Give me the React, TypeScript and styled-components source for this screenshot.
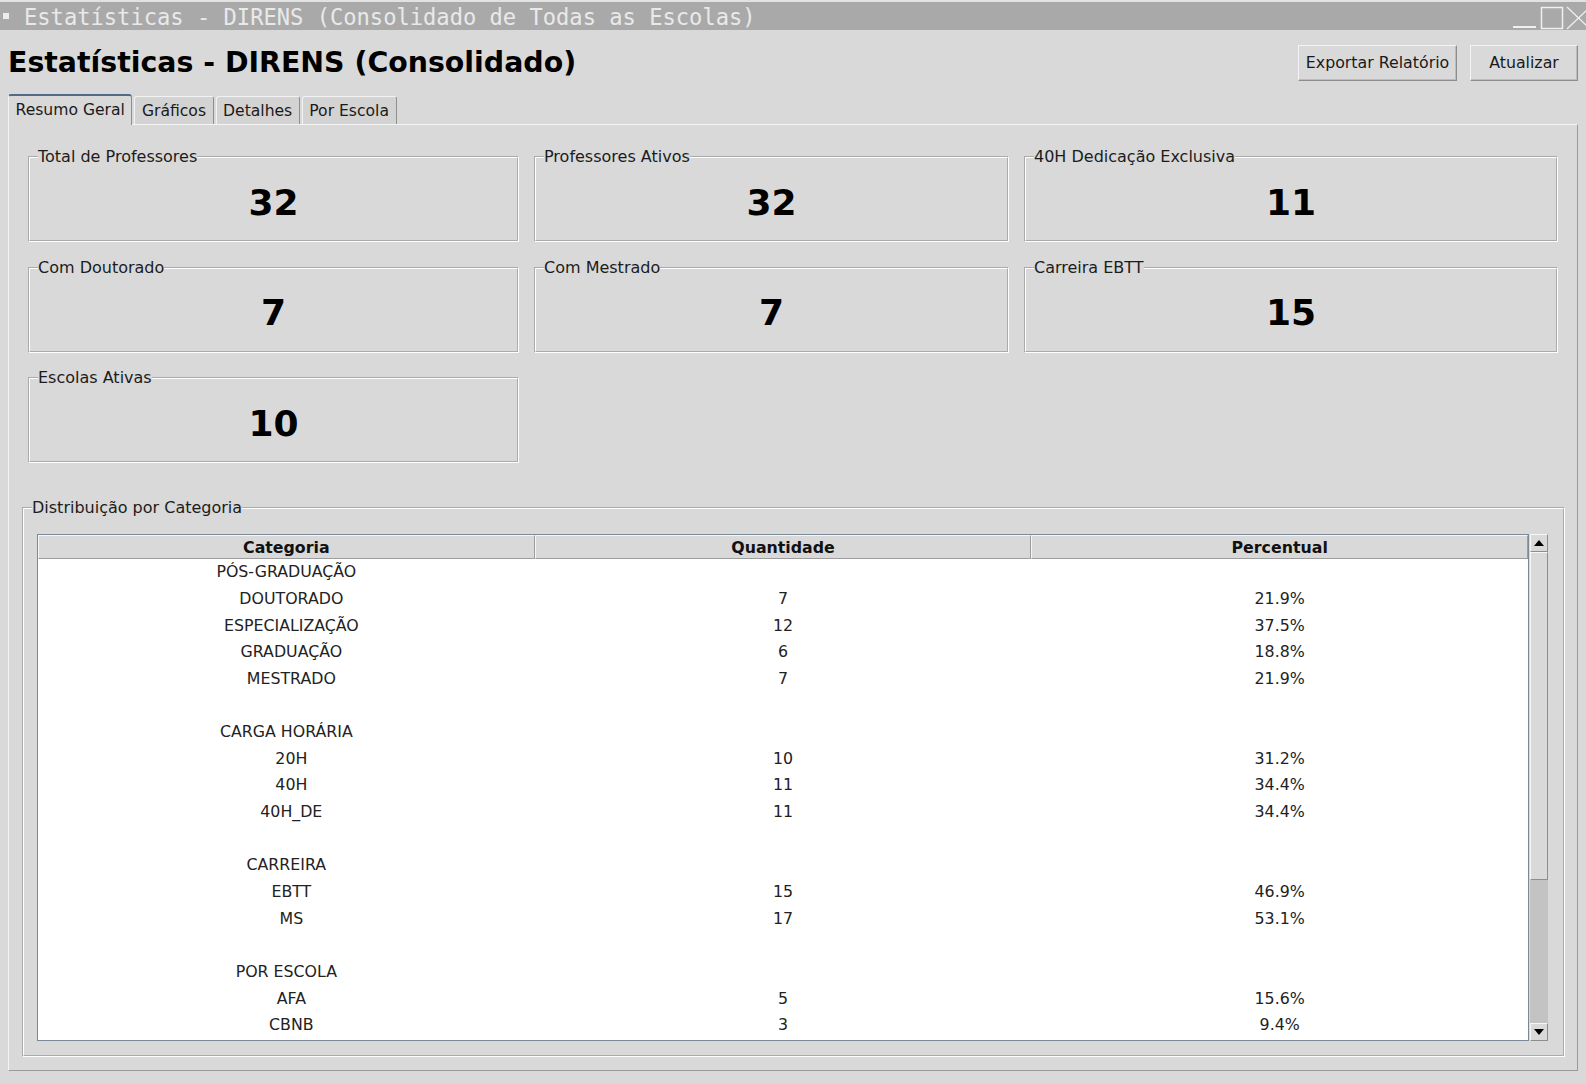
import React from 'react';
import styled, { createGlobalStyle } from 'styled-components';

const GlobalStyle = createGlobalStyle`
  html, body { margin: 0; padding: 0; background: #d9d9d9; }
  body {
    font-family: "DejaVu Sans", "Noto Sans", sans-serif;
    width: 1586px; height: 1084px; overflow: hidden;
  }
  * { box-sizing: border-box; }
`;

const Window = styled.div`
  width: 1586px;
  height: 1084px;
  display: flex;
  flex-direction: column;
  background: #d9d9d9;
`;

const TitleBar = styled.div`
  height: 30px;
  flex: none;
  border-top: 2px solid #e2e2e2;
  background: #a9a9a9;
  display: flex;
  align-items: center;
  padding-left: 3px;
  padding-top: 3px;
  font-family: "DejaVu Sans Mono", monospace;
  font-size: 22.1px;
  color: #e9e9e9;
  white-space: pre;
  overflow: hidden;
`;

const TitleBullet = styled.span`
  width: 6px;
  height: 6px;
  background: #ececec;
  margin-right: 15px;
  margin-top: -4px;
  flex: none;
`;

const TitleText = styled.span`
  flex: 1;
  line-height: 25px;
`;

const WinControls = styled.div`
  display: flex;
  align-items: center;
  height: 28px;
  margin-top: -3px;
  margin-right: -25px;
`;

const Header = styled.div`
  height: 64px;
  flex: none;
  display: flex;
  align-items: center;
  justify-content: space-between;
  padding: 0 8px;
`;

const Heading = styled.h1`
  margin: 0;
  font-size: 28.4px;
  font-weight: bold;
  color: #000;
  line-height: 34px;
  padding-top: 1px;
`;

const ButtonRow = styled.div`
  display: flex;
  gap: 13px;
  padding-top: 1px;
`;

const Button = styled.button<{ $w: number }>`
  width: ${(p) => p.$w}px;
  height: 36px;
  font-family: "DejaVu Sans", sans-serif;
  font-size: 15.8px;
  color: #1a1a1a;
  background: #d9d9d9;
  border: 1px solid;
  border-color: #f4f4f4 #8e8e8e #8e8e8e #f4f4f4;
  box-shadow: inset -1px -1px 0 #bcbcbc;
  padding: 0;
`;

const TabBar = styled.div`
  height: 30px;
  flex: none;
  display: flex;
  align-items: flex-end;
  gap: 2px;
  padding-left: 8px;
  position: relative;
  z-index: 1;
`;

const Tab = styled.div<{ $active?: boolean }>`
  height: ${(p) => (p.$active ? 31 : 28)}px;
  margin-bottom: ${(p) => (p.$active ? -1 : 0)}px;
  padding: 0 6.5px;
  display: flex;
  align-items: center;
  font-size: 15.6px;
  color: #1a1a1a;
  background: ${(p) => (p.$active ? '#d9d9d9' : '#d3d3d3')};
  border-top: ${(p) => (p.$active ? '2px solid #4f6b86' : '1px solid #f2f2f2')};
  border-left: 1px solid #f2f2f2;
  border-right: 1px solid #8f8f8f;
  border-radius: 3px 3px 0 0;
  padding-bottom: ${(p) => (p.$active ? 2 : 0)}px;
`;

const Pane = styled.div`
  flex: 1;
  margin: 0 8px 13px 8px;
  border: 1px solid;
  border-color: #f4f4f4 #9a9a9a #9a9a9a #f4f4f4;
  display: flex;
  flex-direction: column;
  padding: 23px 12px 13px 13px;
  min-height: 0;
`;

const CardGrid = styled.div`
  display: grid;
  grid-template-columns: 491px 475px 534px;
  column-gap: 15px;
  row-gap: 16.5px;
  margin: 0 6px;
`;

const Frame = styled.fieldset`
  margin: 0;
  padding: 0;
  min-width: 0;
  border: 2px groove #ffffff;
`;

const FrameLabel = styled.legend`
  margin-left: 8px;
  padding: 0;
  font-size: 16px;
  line-height: 18px;
  color: #1c1c1c;
`;

const CardValue = styled.div`
  height: 74px;
  display: flex;
  align-items: center;
  justify-content: center;
  font-size: 36px;
  font-weight: bold;
  color: #000;
  padding-bottom: 2px;
`;

const DistFrame = styled(Frame)`
  margin-top: 36px;
  flex: 1;
  display: flex;
  flex-direction: column;
  min-height: 0;
`;

const TableArea = styled.div`
  flex: 1;
  display: flex;
  margin: 17px 15px 14px 13px;
  min-height: 0;
`;

const Table = styled.div`
  flex: 1;
  border: 1px solid #7c8a98;
  background: #fff;
  display: flex;
  flex-direction: column;
  overflow: hidden;
  margin-right: 1px;
`;

const HeadRow = styled.div`
  display: grid;
  grid-template-columns: repeat(3, 1fr);
  background: #d9d9d9;
  flex: none;
`;

const HeadCell = styled.div`
  height: 24px;
  display: flex;
  align-items: center;
  justify-content: center;
  padding-top: 0;
  font-size: 15.8px;
  font-weight: bold;
  color: #111;
  border-top: 1px solid #f6f6f6;
  border-left: 1px solid #f6f6f6;
  border-right: 1px solid #9c9c9c;
  border-bottom: 1px solid #9c9c9c;
`;

const Body = styled.div`
  flex: 1;
  overflow: hidden;
`;

const Row = styled.div`
  display: grid;
  grid-template-columns: repeat(3, 1fr);
  height: 26.65px;
  align-items: center;
`;

const Cell = styled.div`
  text-align: center;
  font-size: 15.8px;
  color: #222;
  white-space: pre;
  line-height: 18px;
`;

const ScrollBar = styled.div`
  width: 18px;
  flex: none;
  display: flex;
  flex-direction: column;
  background: #c3c3c3;
`;

const ArrowButton = styled.div`
  height: 18px;
  flex: none;
  background: #d9d9d9;
  border: 1px solid;
  border-color: #f6f6f6 #8e8e8e #8e8e8e #f6f6f6;
  display: flex;
  align-items: center;
  justify-content: center;
`;

const Thumb = styled.div`
  height: 328px;
  flex: none;
  background: #d9d9d9;
  border: 1px solid;
  border-color: #f6f6f6 #8e8e8e #8e8e8e #f6f6f6;
`;

const Trough = styled.div`
  flex: 1;
`;

type Item = { c: string; q: string; p: string };

const rows: Item[] = [
  { c: 'PÓS-GRADUAÇÃO', q: '', p: '' },
  { c: '  DOUTORADO', q: '7', p: '21.9%' },
  { c: '  ESPECIALIZAÇÃO', q: '12', p: '37.5%' },
  { c: '  GRADUAÇÃO', q: '6', p: '18.8%' },
  { c: '  MESTRADO', q: '7', p: '21.9%' },
  { c: '', q: '', p: '' },
  { c: 'CARGA HORÁRIA', q: '', p: '' },
  { c: '  20H', q: '10', p: '31.2%' },
  { c: '  40H', q: '11', p: '34.4%' },
  { c: '  40H_DE', q: '11', p: '34.4%' },
  { c: '', q: '', p: '' },
  { c: 'CARREIRA', q: '', p: '' },
  { c: '  EBTT', q: '15', p: '46.9%' },
  { c: '  MS', q: '17', p: '53.1%' },
  { c: '', q: '', p: '' },
  { c: 'POR ESCOLA', q: '', p: '' },
  { c: '  AFA', q: '5', p: '15.6%' },
  { c: '  CBNB', q: '3', p: '9.4%' },
];

const cards = [
  { label: 'Total de Professores', value: '32' },
  { label: 'Professores Ativos', value: '32' },
  { label: '40H Dedicação Exclusiva', value: '11' },
  { label: 'Com Doutorado', value: '7' },
  { label: 'Com Mestrado', value: '7' },
  { label: 'Carreira EBTT', value: '15' },
  { label: 'Escolas Ativas', value: '10' },
];

const Arrow = ({ up }: { up?: boolean }) => (
  <svg width="10" height="6" viewBox="0 0 10 6">
    {up ? <polygon points="5,0 10,6 0,6" fill="#000" /> : <polygon points="0,0 10,0 5,6" fill="#000" />}
  </svg>
);

export default function App() {
  return (
    <Window>
      <GlobalStyle />
      <TitleBar>
        <TitleBullet />
        <TitleText>Estatísticas - DIRENS (Consolidado de Todas as Escolas)</TitleText>
        <WinControls>
          <svg width="100" height="28" viewBox="0 0 100 28">
            <line x1="2" y1="25" x2="25" y2="25" stroke="#f0f0f0" strokeWidth="2" />
            <rect x="30.5" y="5.5" width="21" height="21" fill="none" stroke="#f0f0f0" strokeWidth="1.5" />
            <line x1="56" y1="5" x2="79" y2="27" stroke="#f0f0f0" strokeWidth="1.3" />
            <line x1="79" y1="5" x2="56" y2="27" stroke="#f0f0f0" strokeWidth="1.3" />
          </svg>
        </WinControls>
      </TitleBar>
      <Header>
        <Heading>Estatísticas - DIRENS (Consolidado)</Heading>
        <ButtonRow>
          <Button $w={159}>Exportar Relatório</Button>
          <Button $w={108}>Atualizar</Button>
        </ButtonRow>
      </Header>
      <TabBar>
        <Tab $active>Resumo Geral</Tab>
        <Tab>Gráficos</Tab>
        <Tab>Detalhes</Tab>
        <Tab>Por Escola</Tab>
      </TabBar>
      <Pane>
        <CardGrid>
          {cards.map((c) => (
            <Frame key={c.label}>
              <FrameLabel>{c.label}</FrameLabel>
              <CardValue>{c.value}</CardValue>
            </Frame>
          ))}
        </CardGrid>
        <DistFrame>
          <FrameLabel>Distribuição por Categoria</FrameLabel>
          <TableArea>
            <Table>
              <HeadRow>
                <HeadCell>Categoria</HeadCell>
                <HeadCell>Quantidade</HeadCell>
                <HeadCell>Percentual</HeadCell>
              </HeadRow>
              <Body>
                {rows.map((r, i) => (
                  <Row key={i}>
                    <Cell>{r.c}</Cell>
                    <Cell>{r.q}</Cell>
                    <Cell>{r.p}</Cell>
                  </Row>
                ))}
              </Body>
            </Table>
            <ScrollBar>
              <ArrowButton>
                <Arrow up />
              </ArrowButton>
              <Thumb />
              <Trough />
              <ArrowButton>
                <Arrow />
              </ArrowButton>
            </ScrollBar>
          </TableArea>
        </DistFrame>
      </Pane>
    </Window>
  );
}
